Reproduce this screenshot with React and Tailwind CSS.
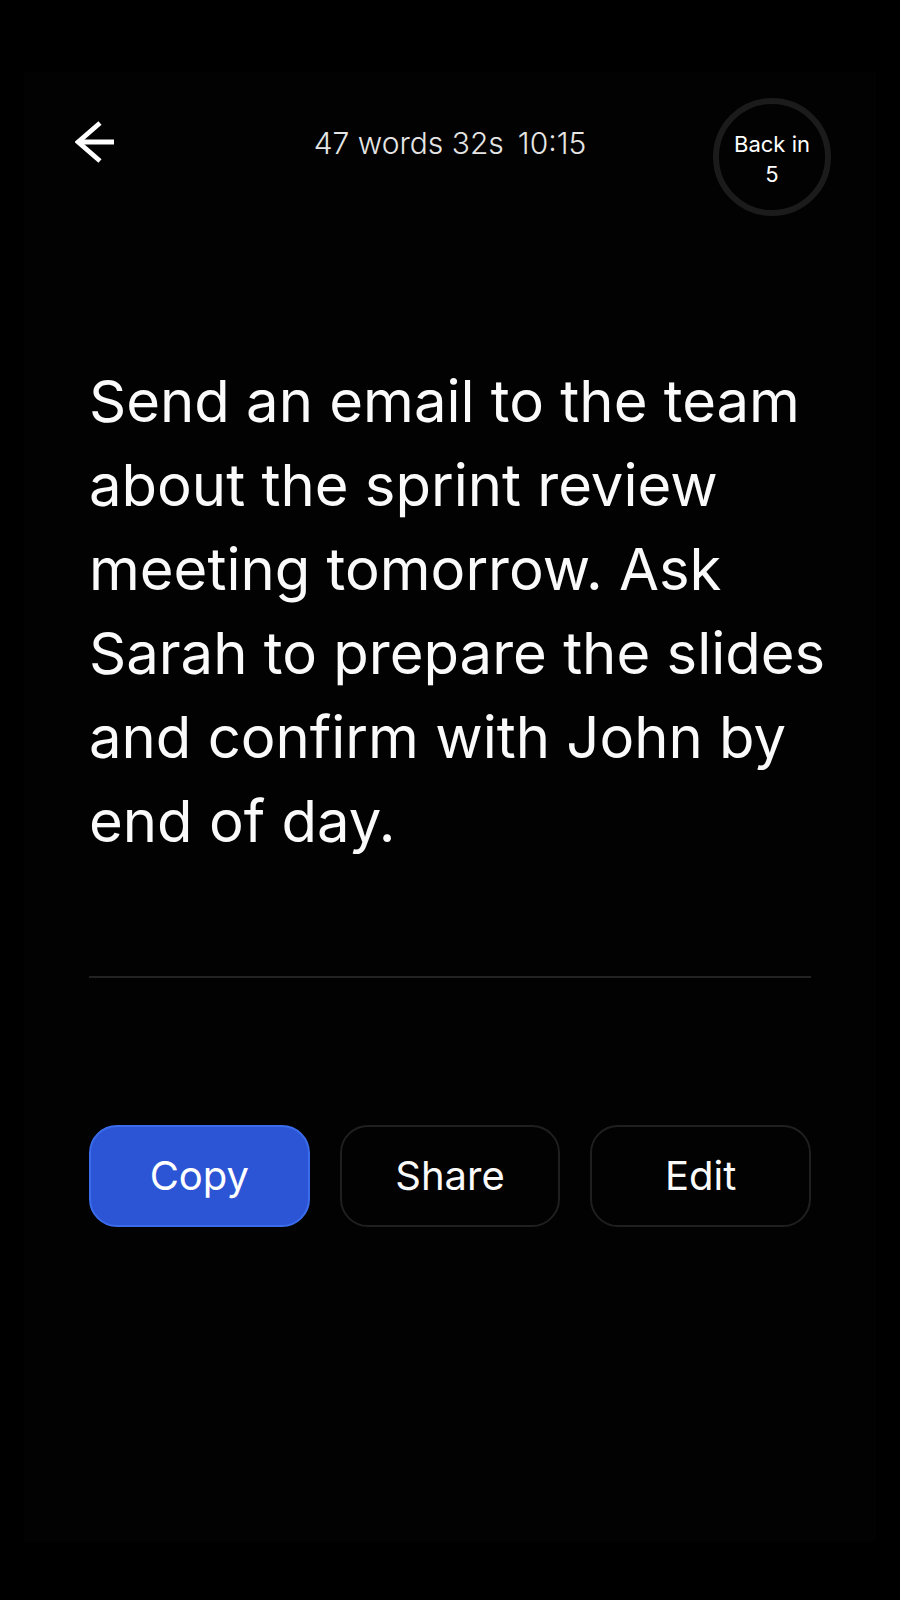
import React from 'react';

const TRANSCRIPT =
  'Send an email to the team about the sprint review meeting tomorrow. Ask Sarah to prepare the slides and confirm with John by end of day.';

const ACTIONS = [
  { label: 'Copy', primary: true },
  { label: 'Share' },
  { label: 'Edit' },
];

const BackArrow = () => (
  <svg className="w-10 h-11" viewBox="0 0 40 44" fill="none" stroke="currentColor" strokeWidth="4.8" aria-hidden="true">
    <path d="M39 22H4" />
    <path d="M25 3L3.2 22L25 41" strokeLinejoin="miter" />
  </svg>
);

function ActionButton({ label, primary }) {
  return (
    <button
      type="button"
      className={`flex-1 h-[102px] rounded-[28px] border-2 text-[40px] leading-none ${
        primary ? 'bg-[#2c55d6] border-[#3a6cec] text-white' : 'bg-transparent border-[#1f1f1f] text-neutral-50'
      }`}
    >
      {label}
    </button>
  );
}

export default function App() {
  return (
    <div className="min-h-screen flex bg-black px-6 pt-18 pb-[58px] font-['Inter',sans-serif] text-white">
      <main className="flex-1 bg-[#020202]">
        {/* Header */}
        <header className="grid grid-cols-[1fr_auto_1fr] items-start px-[45px] pt-[26px]">
          <button type="button" aria-label="Back" className="justify-self-start ml-1.5 mt-[22px]">
            <BackArrow />
          </button>
          <p className="flex gap-3.5 mt-[22px] text-[30px] leading-[46px] font-light text-neutral-200 whitespace-nowrap">
            <span>47 words 32s</span>
            <span>10:15</span>
          </p>
          <div className="justify-self-end w-[118px] h-[118px] rounded-full border-6 border-[#1b1b1b] flex items-center justify-center text-center text-[22px] leading-[30px]">
            <p className="pt-1">
              Back in
              <br />5
            </p>
          </div>
        </header>

        {/* Transcript */}
        <section className="px-[65px] pt-[143px]">
          <p className="-mr-5 text-[58px] leading-[84px] text-neutral-50">{TRANSCRIPT}</p>
          <hr className="mt-[113px] border-t-2 border-[#222222]" />
        </section>

        {/* Actions */}
        <div className="flex gap-[30px] px-[65px] pt-[147px]">
          {ACTIONS.map((action) => (
            <ActionButton key={action.label} {...action} />
          ))}
        </div>
      </main>
    </div>
  );
}
